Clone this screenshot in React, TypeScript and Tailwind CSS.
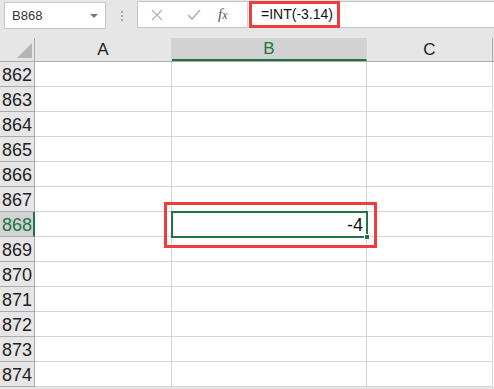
import React from 'react';

const rows = [862, 863, 864, 865, 866, 867, 868, 869, 870, 871, 872, 873, 874];
const selectedRow = 868;

export default function App() {
  return (
    <div className="w-[494px] h-[389px] bg-[#e6e6e6] overflow-hidden font-['Liberation_Sans',Arial,sans-serif] text-[#222]">
      {/* Formula bar */}
      <div className="flex h-[38px] pt-[1px]">
        <div className="ml-[4px] mt-[1px] w-[102px] h-[27px] bg-white border border-[#c6c6c6] flex items-center justify-between pl-[7px] pr-[7px]">
          <span className="text-[13px] text-[#333]">B868</span>
          <span className="w-0 h-0 border-l-[4px] border-r-[4px] border-t-[4px] border-l-transparent border-r-transparent border-t-[#777]" />
        </div>
        <div className="w-[31px] flex flex-col items-center pt-[10px] gap-[2px]">
          <span className="w-[2px] h-[2px] bg-[#a8a8a8]" />
          <span className="w-[2px] h-[2px] bg-[#a8a8a8]" />
          <span className="w-[2px] h-[2px] bg-[#a8a8a8]" />
        </div>
        <div className="flex-1 h-[27px] flex bg-white border border-[#c6c6c6] border-r-0">
          <div className="w-[110px] flex items-center border-r border-[#d4d4d4]">
            <svg width="12" height="12" viewBox="0 0 12 12" className="ml-[13px]">
              <path d="M1 1L11 11M11 1L1 11" stroke="#b3b3b3" strokeWidth="1.3" fill="none" />
            </svg>
            <svg width="14" height="12" viewBox="0 0 14 12" className="ml-[24px]">
              <path d="M1 6L5 10L13 1" stroke="#b3b3b3" strokeWidth="1.6" fill="none" />
            </svg>
            <span className="ml-[17px] text-[15px] italic font-['Liberation_Serif',serif] text-[#555]">
              f<span className="text-[12px]">x</span>
            </span>
          </div>
          <div className="relative flex-1 flex items-center pl-[13px]">
            <span className="text-[14px] text-[#111]">=INT(-3.14)</span>
            <div className="absolute left-[1px] top-[-1px] w-[91px] h-[27px] border-[3px] border-[#f03c3c]" />
          </div>
        </div>
      </div>

      {/* Sheet */}
      <div className="relative bg-white">
        <div className="flex h-[24px] bg-[#e6e6e6] border-b border-[#ababab] text-[17px]">
          <div className="w-[35px] relative border-r border-[#ababab]">
            <svg width="16" height="16" viewBox="0 0 16 16" className="absolute left-[17px] top-[5px]">
              <path d="M15 0L15 15L0 15Z" fill="#b4b4b4" />
            </svg>
          </div>
          <div className="w-[137px] flex items-center justify-center border-r border-[#d4d4d4]">A</div>
          <div className="w-[195px] flex items-center justify-center bg-[#d2d2d2] border-r border-[#d4d4d4] border-b-2 border-b-[#217346] text-[#217346]">B</div>
          <div className="w-[126px] flex items-center justify-center border-r border-[#ababab]">C</div>
        </div>
        {rows.map((r) => (
          <div key={r} className="flex h-[25px]">
            <div
              className={`w-[35px] flex items-center pl-[2px] pt-[2px] text-[18px] border-b ${
                r === selectedRow
                  ? 'bg-[#d2d2d2] text-[#217346] border-r-2 border-r-[#217346] border-b-[#ababab]'
                  : 'bg-[#e6e6e6] border-r border-[#ababab]'
              }`}
            >
              {r}
            </div>
            <div className="w-[137px] border-r border-b border-[#d4d4d4]" />
            <div className="w-[195px] border-r border-b border-[#d4d4d4]" />
            <div className="w-[126px] border-r border-b border-[#d4d4d4]" />
          </div>
        ))}

        {/* Active cell B868 */}
        <div className="absolute left-[171px] top-[173px] w-[197px] h-[27px] border-2 border-[#217346] flex items-center justify-end pr-[3px] pt-[2px] text-[18px] text-[#111]">
          -4
          <span className="absolute right-[-4px] bottom-[-4px] w-[6px] h-[6px] bg-[#217346] border border-white" />
        </div>
        <div className="absolute left-[164px] top-[164px] w-[213px] h-[46px] border-[3px] border-[#f03c3c]" />
      </div>
    </div>
  );
}
